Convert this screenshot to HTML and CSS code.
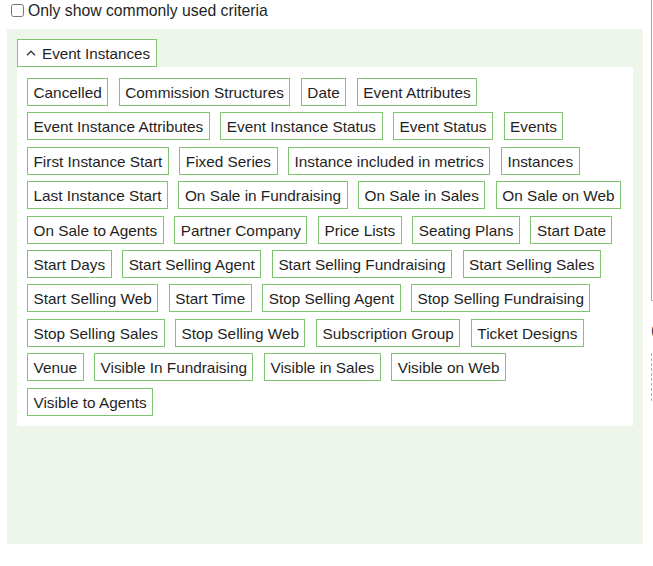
FILE: index.html
```html
<!DOCTYPE html>
<html lang="en">
<head>
<meta charset="utf-8">
<title>Criteria</title>
<link rel="stylesheet" href="styles.css">
</head>
<body>
<div class="layout">
  <main class="main">
    <label class="common-toggle">
      <input type="checkbox" class="common-check">
      <span>Only show commonly used criteria</span>
    </label>

    <section class="criteria-panel">
      <button class="group-toggle" type="button">
        <svg class="chevron" width="10" height="6" viewBox="0 0 10 6" aria-hidden="true">
          <path d="M1 5.2 L5 1.2 L9 5.2" fill="none" stroke="#333" stroke-width="1.3"/>
        </svg>
        <span>Event Instances</span>
      </button>
      <div class="group-body">
        <ul class="tag-list">
          <li class="tag">Cancelled</li>
          <li class="tag">Commission Structures</li>
          <li class="tag">Date</li>
          <li class="tag">Event Attributes</li>
          <li class="tag">Event Instance Attributes</li>
          <li class="tag">Event Instance Status</li>
          <li class="tag">Event Status</li>
          <li class="tag">Events</li>
          <li class="tag">First Instance Start</li>
          <li class="tag">Fixed Series</li>
          <li class="tag">Instance included in metrics</li>
          <li class="tag">Instances</li>
          <li class="tag">Last Instance Start</li>
          <li class="tag">On Sale in Fundraising</li>
          <li class="tag">On Sale in Sales</li>
          <li class="tag">On Sale on Web</li>
          <li class="tag">On Sale to Agents</li>
          <li class="tag">Partner Company</li>
          <li class="tag">Price Lists</li>
          <li class="tag">Seating Plans</li>
          <li class="tag">Start Date</li>
          <li class="tag">Start Days</li>
          <li class="tag">Start Selling Agent</li>
          <li class="tag">Start Selling Fundraising</li>
          <li class="tag">Start Selling Sales</li>
          <li class="tag">Start Selling Web</li>
          <li class="tag">Start Time</li>
          <li class="tag">Stop Selling Agent</li>
          <li class="tag">Stop Selling Fundraising</li>
          <li class="tag">Stop Selling Sales</li>
          <li class="tag">Stop Selling Web</li>
          <li class="tag">Subscription Group</li>
          <li class="tag">Ticket Designs</li>
          <li class="tag">Venue</li>
          <li class="tag">Visible In Fundraising</li>
          <li class="tag">Visible in Sales</li>
          <li class="tag">Visible on Web</li>
          <li class="tag">Visible to Agents</li>
        </ul>
      </div>
    </section>
  </main>

  <aside class="side">
    <div class="side-box"></div>
    <div class="side-mark">(</div>
    <div class="side-drop"></div>
  </aside>
</div>
</body>
</html>
```

FILE: styles.css
```css
html, body {
  margin: 0;
  padding: 0;
  background: #ffffff;
}

body {
  font-family: "Liberation Sans", Arial, sans-serif;
  color: #1f1f24;
  overflow: hidden;
}

.layout {
  display: flex;
  align-items: flex-start;
  gap: 8px;
  width: 653px;
  height: 566px;
  overflow: hidden;
}

.main {
  flex: 0 0 636px;
  padding-left: 7px;
}

/* top checkbox row */
.common-toggle {
  display: flex;
  align-items: center;
  height: 21px;
  margin-bottom: 8px;
  padding-left: 4px;
  font-size: 15.75px;
  line-height: 20px;
  cursor: pointer;
}

.common-check {
  width: 13px;
  height: 13px;
  margin: 0 4px 0 0;
}

/* green criteria panel */
.criteria-panel {
  background: #eef5ea;
  padding: 10px;
  min-height: 495px;
}

.group-toggle {
  display: flex;
  align-items: center;
  gap: 6px;
  height: 28px;
  padding: 0 6px 0 8px;
  background: #ffffff;
  border: 1px solid #7fc470;
  font-family: inherit;
  font-size: 15.2px;
  color: #1f1f24;
  cursor: pointer;
}

.chevron {
  display: block;
  margin-top: -1px;
}

.group-body {
  background: #ffffff;
  padding: 11px 0 10px 10px;
}

.tag-list {
  list-style: none;
  margin: 0;
  padding: 0;
  display: flex;
  flex-wrap: wrap;
  row-gap: 6.4px;
  column-gap: 10.5px;
}

.tag {
  border: 1px solid #7fc470;
  padding: 4px 5.5px 3px;
  font-size: 15.35px;
  line-height: 19px;
  white-space: nowrap;
}

/* neighbouring column, mostly off-screen */
.side {
  flex: 0 0 200px;
  display: flex;
  flex-direction: column;
}

.side-box {
  height: 300px;
  border-left: 1px solid #a8a8a8;
  border-bottom: 1px solid #a8a8a8;
}

.side-mark {
  margin-top: 19px;
  font-size: 15px;
  line-height: 20px;
  color: #1f2a55;
}

.side-drop {
  margin-top: 13px;
  height: 48px;
  border-left: 1px dashed #b0b0b0;
}
```
